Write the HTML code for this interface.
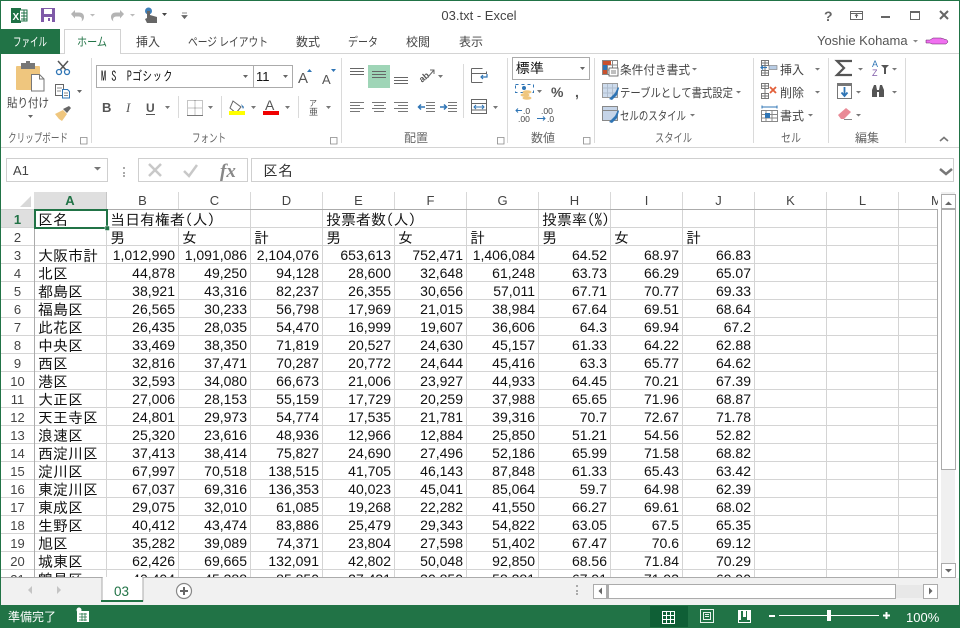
<!DOCTYPE html>
<html><head><meta charset="utf-8">
<style>
html,body{margin:0;padding:0;background:#fff}
#p{position:relative;width:960px;height:628px;overflow:hidden;background:#fff;font-family:"Liberation Sans","IPAGothic",sans-serif}
#g{position:absolute;left:35px;top:210px;width:902px;height:367px;overflow:hidden;background:repeating-linear-gradient(to bottom,transparent 0,transparent 17px,#d4d4d4 17px,#d4d4d4 18px)}
table{border-collapse:separate;border-spacing:0;table-layout:fixed;width:864px;position:absolute;left:0;top:0;background:#fff}
col{width:72px}
td{height:15px;padding:2px 3px 0 0;border-right:1px solid #d4d4d4;border-bottom:1px solid #d4d4d4;font:14px/15px "Liberation Sans",sans-serif;color:#111;text-align:right;box-sizing:content-box;white-space:nowrap;overflow:visible;vertical-align:top}
tr td{width:68px}
td.t{font:15px/15px "IPAGothic","Liberation Sans",sans-serif;text-align:left;padding:2px 0 0 3px;width:68px}
#rh div{position:absolute;left:1px;width:33px;height:17px;border-bottom:1px solid #d4d4d4;text-align:center;font:13px/20px "Liberation Sans",sans-serif;color:#444}
#ch div{position:absolute;top:192px;height:17px;text-align:center;font:13px/17px "Liberation Sans",sans-serif;color:#444;box-sizing:border-box;border-right:1px solid #d8d8d8}
svg{position:absolute;left:0;top:0}
svg text{font-family:"Noto Sans CJK JP","Liberation Sans",sans-serif;font-size:12px;fill:#444}
svg text.l{fill:#666}
</style></head><body><div id="p">

<div id="ch">
<div style="left:34px;width:73px;background:#dfdfdf;font-weight:bold;color:#217346;border-right:1px solid #c6c6c6">A</div>
<div style="left:107px;width:72px">B</div><div style="left:179px;width:72px">C</div><div style="left:251px;width:72px">D</div><div style="left:323px;width:72px">E</div><div style="left:395px;width:72px">F</div><div style="left:467px;width:72px">G</div><div style="left:539px;width:72px">H</div><div style="left:611px;width:72px">I</div><div style="left:683px;width:72px">J</div><div style="left:755px;width:72px">K</div><div style="left:827px;width:72px">L</div><div style="left:899px;width:39px;border:0;text-align:left;padding-left:32px;overflow:hidden;white-space:nowrap">M</div>
</div>

<div id="rh">
<div style="top:210px;background:#dfdfdf;color:#217346;font-weight:bold">1</div>
<div style="top:228px">2</div><div style="top:246px">3</div><div style="top:264px">4</div><div style="top:282px">5</div><div style="top:300px">6</div><div style="top:318px">7</div><div style="top:336px">8</div><div style="top:354px">9</div><div style="top:372px">10</div><div style="top:390px">11</div><div style="top:408px">12</div><div style="top:426px">13</div><div style="top:444px">14</div><div style="top:462px">15</div><div style="top:480px">16</div><div style="top:498px">17</div><div style="top:516px">18</div><div style="top:534px">19</div><div style="top:552px">20</div>
<div style="top:570px;height:7px;border:0;overflow:hidden">21</div>
</div>

<div id="g"><table><colgroup><col><col><col><col><col><col><col><col><col><col><col><col></colgroup>
<tr><td class="t">区名</td><td class="t" style="border-right:0">当日有権者(人)</td><td class="t" style="border-right:1px solid #d4d4d4"></td><td class="t"></td><td class="t" style="border-right:0">投票者数(人)</td><td class="t" style="border-right:1px solid #d4d4d4"></td><td class="t"></td><td class="t">投票率(%)</td><td class="t"></td><td class="t"></td><td class="t"></td><td class="t"></td></tr>
<tr><td class="t"></td><td class="t">男</td><td class="t">女</td><td class="t">計</td><td class="t">男</td><td class="t">女</td><td class="t">計</td><td class="t">男</td><td class="t">女</td><td class="t">計</td><td class="t"></td><td class="t"></td></tr>
<tr><td class="t">大阪市計</td><td>1,012,990</td><td>1,091,086</td><td>2,104,076</td><td>653,613</td><td>752,471</td><td>1,406,084</td><td>64.52</td><td>68.97</td><td>66.83</td><td></td><td></td></tr>
<tr><td class="t">北区</td><td>44,878</td><td>49,250</td><td>94,128</td><td>28,600</td><td>32,648</td><td>61,248</td><td>63.73</td><td>66.29</td><td>65.07</td><td></td><td></td></tr>
<tr><td class="t">都島区</td><td>38,921</td><td>43,316</td><td>82,237</td><td>26,355</td><td>30,656</td><td>57,011</td><td>67.71</td><td>70.77</td><td>69.33</td><td></td><td></td></tr>
<tr><td class="t">福島区</td><td>26,565</td><td>30,233</td><td>56,798</td><td>17,969</td><td>21,015</td><td>38,984</td><td>67.64</td><td>69.51</td><td>68.64</td><td></td><td></td></tr>
<tr><td class="t">此花区</td><td>26,435</td><td>28,035</td><td>54,470</td><td>16,999</td><td>19,607</td><td>36,606</td><td>64.3</td><td>69.94</td><td>67.2</td><td></td><td></td></tr>
<tr><td class="t">中央区</td><td>33,469</td><td>38,350</td><td>71,819</td><td>20,527</td><td>24,630</td><td>45,157</td><td>61.33</td><td>64.22</td><td>62.88</td><td></td><td></td></tr>
<tr><td class="t">西区</td><td>32,816</td><td>37,471</td><td>70,287</td><td>20,772</td><td>24,644</td><td>45,416</td><td>63.3</td><td>65.77</td><td>64.62</td><td></td><td></td></tr>
<tr><td class="t">港区</td><td>32,593</td><td>34,080</td><td>66,673</td><td>21,006</td><td>23,927</td><td>44,933</td><td>64.45</td><td>70.21</td><td>67.39</td><td></td><td></td></tr>
<tr><td class="t">大正区</td><td>27,006</td><td>28,153</td><td>55,159</td><td>17,729</td><td>20,259</td><td>37,988</td><td>65.65</td><td>71.96</td><td>68.87</td><td></td><td></td></tr>
<tr><td class="t">天王寺区</td><td>24,801</td><td>29,973</td><td>54,774</td><td>17,535</td><td>21,781</td><td>39,316</td><td>70.7</td><td>72.67</td><td>71.78</td><td></td><td></td></tr>
<tr><td class="t">浪速区</td><td>25,320</td><td>23,616</td><td>48,936</td><td>12,966</td><td>12,884</td><td>25,850</td><td>51.21</td><td>54.56</td><td>52.82</td><td></td><td></td></tr>
<tr><td class="t">西淀川区</td><td>37,413</td><td>38,414</td><td>75,827</td><td>24,690</td><td>27,496</td><td>52,186</td><td>65.99</td><td>71.58</td><td>68.82</td><td></td><td></td></tr>
<tr><td class="t">淀川区</td><td>67,997</td><td>70,518</td><td>138,515</td><td>41,705</td><td>46,143</td><td>87,848</td><td>61.33</td><td>65.43</td><td>63.42</td><td></td><td></td></tr>
<tr><td class="t">東淀川区</td><td>67,037</td><td>69,316</td><td>136,353</td><td>40,023</td><td>45,041</td><td>85,064</td><td>59.7</td><td>64.98</td><td>62.39</td><td></td><td></td></tr>
<tr><td class="t">東成区</td><td>29,075</td><td>32,010</td><td>61,085</td><td>19,268</td><td>22,282</td><td>41,550</td><td>66.27</td><td>69.61</td><td>68.02</td><td></td><td></td></tr>
<tr><td class="t">生野区</td><td>40,412</td><td>43,474</td><td>83,886</td><td>25,479</td><td>29,343</td><td>54,822</td><td>63.05</td><td>67.5</td><td>65.35</td><td></td><td></td></tr>
<tr><td class="t">旭区</td><td>35,282</td><td>39,089</td><td>74,371</td><td>23,804</td><td>27,598</td><td>51,402</td><td>67.47</td><td>70.6</td><td>69.12</td><td></td><td></td></tr>
<tr><td class="t">城東区</td><td>62,426</td><td>69,665</td><td>132,091</td><td>42,802</td><td>50,048</td><td>92,850</td><td>68.56</td><td>71.84</td><td>70.29</td><td></td><td></td></tr>
<tr><td class="t">鶴見区</td><td>40,404</td><td>45,388</td><td>85,850</td><td>27,431</td><td>30,850</td><td>58,281</td><td>67.91</td><td>71.93</td><td>69.90</td><td></td><td></td></tr>
</table></div>

<svg width="960" height="628" viewBox="0 0 960 628">
<!-- window frame -->
<rect x="0" y="0" width="960" height="1" fill="#217346"/>
<rect x="0" y="0" width="1" height="628" fill="#217346"/>
<rect x="959" y="0" width="1" height="628" fill="#217346"/>
<!-- quick access -->
<rect x="11" y="8" width="10" height="15" fill="#1e7145"/><path d="M20 10h7v11h-7" fill="#fff" stroke="#1e7145"/><path d="M21 13h6M21 16h6M21 19h6M24 10v11" stroke="#1e7145"/>
<text x="12.500" y="20" style="font:bold 10px 'Liberation Sans';fill:#fff">X</text>
<rect x="41" y="8" width="14" height="14" fill="#7f5aa8"/><rect x="44" y="9" width="8" height="5" fill="#fff"/><rect x="44" y="17" width="8" height="5" fill="#fff"/><rect x="48" y="18" width="2" height="3" fill="#7f5aa8"/>
<path d="M71 14l4-4v2.500h4c3.500 0 5 2 5 4.500 0 2-1 3.500-2.500 4.500 1-2 .5-5-3-5h-3.500v2z" fill="#b4b4b4"/>
<path d="M124 14l-4-4v2.500h-4c-3.500 0-5 2-5 4.500 0 2 1 3.500 2.500 4.500-1-2-.5-5 3-5h3.500v2z" fill="#b4b4b4"/>
<path d="M90 14h5l-2.500 2.500zM130 14h5l-2.500 2.500z" fill="#bbb"/>
<circle cx="148.500" cy="11" r="3.500" fill="#3f7fb8"/><path d="M147 11v7l-2 1 2 4h10v-6l-7-2v-4z" fill="#666"/>
<path d="M162 13h5l-2.500 3z" fill="#444"/><path d="M182 13h5M182 15.500h5l-2.500 3z" stroke="#666" stroke-width=".8" fill="#666"/>
<text x="479" y="20" text-anchor="middle" style="font:13px 'Liberation Sans';fill:#444">03.txt - Excel</text>
<!-- window controls -->
<text x="824" y="21" style="font:bold 14px 'Liberation Sans';fill:#666">?</text>
<rect x="850.500" y="11.500" width="12" height="8" fill="none" stroke="#666"/><path d="M850 13.500h13M856.500 18v-3M855 16l1.500-1.500 1.500 1.500" stroke="#666" fill="none"/>
<rect x="881" y="16" width="9" height="2" fill="#666"/>
<rect x="910.500" y="11.500" width="9" height="8" fill="none" stroke="#666"/><rect x="910" y="11" width="10" height="2" fill="#666"/>
<path d="M940 11l8 8M948 11l-8 8" stroke="#666" stroke-width="2"/>
<!-- tabs -->
<rect x="1" y="29" width="59" height="25" fill="#217346"/>
<path d="M64.500 54v-24.500h56v24.500" fill="#fff" stroke="#d2d2d2"/>
<rect x="60" y="53" width="4" height="1" fill="#d4d4d4"/><rect x="120" y="53" width="839" height="1" fill="#d4d4d4"/>
<text x="13" y="46" textLength="34" lengthAdjust="spacingAndGlyphs" style="fill:#fff">ファイル</text>
<text x="77" y="46" textLength="30" lengthAdjust="spacingAndGlyphs" style="fill:#217346">ホーム</text>
<text x="136" y="46">挿入</text><text x="188" y="46" textLength="80" lengthAdjust="spacingAndGlyphs">ページ レイアウト</text><text x="296" y="46">数式</text><text x="348" y="46" textLength="30" lengthAdjust="spacingAndGlyphs">データ</text><text x="406" y="46">校閲</text><text x="459" y="46">表示</text>
<text x="817" y="45" style="font:13px 'Liberation Sans';fill:#555">Yoshie Kohama</text>
<path d="M913 40h5l-2.500 2.500z" fill="#888"/>
<path d="M926 40h4l3-2h8l6 2 1 2-2 2h-14l-2-1h-4z" fill="#f070f0" stroke="#602060" stroke-width=".5"/>
<rect x="1" y="147" width="958" height="1" fill="#d4d4d4"/>
<!-- ribbon separators -->
<path d="M91.500 58v85M341.500 58v85M507.500 58v85M594.500 58v85M753.500 58v85M828.500 58v85M905.500 58v85" stroke="#dadada"/>
<path d="M178.500 96v22M221.500 96v22M298.500 96v22M463.500 64v54" stroke="#dadada"/>
<!-- launchers -->
<path d="M80.500 137.500h6.500v6.500h-6.500zM330.500 137.500h6.500v6.500h-6.500zM497.500 137.500h6.500v6.500h-6.500zM583.500 137.500h6.500v6.500h-6.500z" fill="none" stroke="#888" stroke-width=".8"/>
<!-- clipboard group -->
<rect x="16" y="66" width="24" height="24" rx="1" fill="#efc67e"/><rect x="21" y="63" width="14" height="6" fill="#777"/><rect x="26" y="61" width="4" height="4" fill="#777"/>
<path d="M31.500 74.500h8l4.500 4.500v12h-12.500z" fill="#fff" stroke="#777"/><path d="M39.500 74.500v4.500h4.500" fill="none" stroke="#777"/>
<text x="7" y="107" textLength="42" lengthAdjust="spacingAndGlyphs">貼り付け</text>
<path d="M28 115h5l-2.500 3zM77 90h5l-2.500 3z" fill="#666"/>
<path d="M58 61l8 9M68 61l-8 9" stroke="#555" stroke-width="1.500"/><circle cx="59" cy="72" r="2.500" fill="none" stroke="#2f75b5" stroke-width="1.300"/><circle cx="67" cy="72" r="2.500" fill="none" stroke="#2f75b5" stroke-width="1.300"/>
<path d="M55.500 84.500h8v11h-8z" fill="#fff" stroke="#666"/><path d="M62.500 89.500h5l2 2v6.500h-7z" fill="#fff" stroke="#2f75b5"/><path d="M57 88h5M57 91h4M64 93h4M64 95.500h4" stroke="#666" stroke-width=".8"/>
<path d="M55 114l8-4 4 4-5 7-3-2z" fill="#efc67e"/><path d="M63 109l6-3 2 2-4 5z" fill="#666"/>
<text x="8" y="142" class="l" textLength="60" lengthAdjust="spacingAndGlyphs">クリップボード</text>
<!-- font group -->
<rect x="96.500" y="65.500" width="157" height="22" fill="#fff" stroke="#ababab"/><rect x="253.500" y="65.500" width="39" height="22" fill="#fff" stroke="#ababab"/>
<text x="101" y="81" textLength="72" lengthAdjust="spacingAndGlyphs" style="font:13.500px 'IPAGothic','Liberation Sans',sans-serif;fill:#111">M S&#160;&#160;Pゴシック</text>
<text x="256" y="81" style="font:13px 'Liberation Sans';fill:#111">11</text>
<path d="M243 75h5l-2.500 3zM283 75h5l-2.500 3z" fill="#666"/>
<text x="298" y="83" style="font:15px 'Liberation Sans';fill:#555">A</text><path d="M307 72h5l-2.500-3z" fill="#2f75b5"/>
<text x="322" y="84" style="font:13px 'Liberation Sans';fill:#555">A</text><path d="M331 69h5l-2.500 3z" fill="#2f75b5"/>
<text x="102" y="112" style="font:bold 13px 'Liberation Sans';fill:#555">B</text>
<text x="126" y="112" style="font:italic 13px 'Liberation Serif';fill:#555">I</text>
<text x="146" y="112" style="font:bold 12px 'Liberation Sans';fill:#555">U</text><rect x="146" y="114" width="9" height="1" fill="#555"/>
<path d="M165 106h5l-2.500 3zM208 106h5l-2.500 3zM251 106h5l-2.500 3zM285 106h5l-2.500 3z" fill="#777"/>
<path d="M187.500 100.500h15v15h-15zM187.500 108h15M195 100.500v15" fill="none" stroke="#888" stroke-dasharray="1 1"/><path d="M187 115.500h16" stroke="#777"/>
<path d="M233 101l8 6-5 6-6-5z" fill="#fff" stroke="#666"/><path d="M241 104l3 3-1 2z" fill="#2f75b5"/><rect x="229" y="111" width="16" height="4" fill="#ffff00"/>
<text x="265" y="110" style="font:14px 'Liberation Sans';fill:#555">A</text><rect x="263" y="111" width="16" height="4" fill="#f00000"/>
<text x="309" y="106" style="font:8px 'Noto Sans CJK JP';fill:#555">ア</text><text x="309" y="115" style="font:9px 'Noto Sans CJK JP';fill:#555">亜</text>
<path d="M326 106h5l-2.500 3z" fill="#777"/>
<text x="192" y="142" class="l" textLength="34" lengthAdjust="spacingAndGlyphs">フォント</text>
<!-- alignment -->
<rect x="368" y="65" width="22" height="23" fill="#9fd5b7"/>
<path d="M350 68.500h14M350 71.500h14M350 74.500h14M372 74.500h14M372 77.500h14M372 71.500h14M394 77.500h14M394 80.500h14M394 83.500h14" stroke="#666"/>
<path d="M350 102.500h14M350 105.500h10M350 108.500h14M350 111.500h10M372 102.500h14M374 105.500h10M372 108.500h14M374 111.500h10M394 102.500h14M398 105.500h10M394 108.500h14M398 111.500h10" stroke="#777"/>
<path d="M426 102.500h9M426 105.500h9M426 108.500h9M426 111.500h9M448 102.500h9M448 105.500h9M448 108.500h9M448 111.500h9" stroke="#777"/>
<path d="M425 107h-6M421 104.500l-2.500 2.500 2.500 2.500M440 107h6M444 104.500l2.500 2.500-2.500 2.500" stroke="#2f75b5" stroke-width="1.500" fill="none"/>
<text x="418" y="80" transform="rotate(-40 424 76)" style="font:bold 9px 'Liberation Sans';fill:#555">ab</text><path d="M428 77l6-7M430 70h4v4" stroke="#666" fill="none"/>
<path d="M438 75h5l-2.500 3zM493 106h5l-2.500 3z" fill="#777"/>
<path d="M471.500 68.500h11M471.500 73.500h15v-2M471.500 82.500h11M471.500 68.500v14" fill="none" stroke="#666"/><path d="M487 74v3h-6M483 75l-2 2 2 2" fill="none" stroke="#2f75b5" stroke-width="1.200"/>
<path d="M471.500 99.500h15v14h-15zM471.500 103.500h15M471.500 110h15" fill="none" stroke="#666"/><path d="M474 107h10M476 105l-2 2 2 2M482 105l2 2-2 2" fill="none" stroke="#2f75b5"/>
<text x="404" y="142" class="l">配置</text>
<!-- number -->
<rect x="512.500" y="57.500" width="77" height="22" fill="#fff" stroke="#ababab"/>
<text x="516" y="73" style="font:14px 'IPAGothic';fill:#111">標準</text>
<path d="M580 67h5l-2.500 3z" fill="#666"/>
<path d="M515.500 84.500h18v8h-18z" fill="none" stroke="#2f75b5" stroke-dasharray="3 3"/><circle cx="524" cy="88" r="2" fill="#2f75b5"/><ellipse cx="527" cy="92" rx="4.500" ry="1.800" fill="#efc67e"/><ellipse cx="525" cy="95" rx="4.500" ry="1.800" fill="#efc67e"/><ellipse cx="527" cy="98" rx="4.500" ry="1.800" fill="#efc67e"/>
<path d="M537 90h5l-2.500 3z" fill="#777"/>
<text x="551" y="97" style="font:bold 14px 'Liberation Sans';fill:#555">%</text>
<text x="575" y="97" style="font:bold 14px 'Liberation Sans';fill:#555">,</text>
<text x="523" y="114" style="font:8.500px 'Liberation Sans';fill:#444">.0</text><text x="518" y="122" style="font:8.500px 'Liberation Sans';fill:#444">.00</text>
<path d="M522 110.500h-6M518 108.500l-2 2 2 2" stroke="#2f75b5" fill="none"/>
<text x="541" y="114" style="font:8.500px 'Liberation Sans';fill:#444">.00</text><text x="547" y="122" style="font:8.500px 'Liberation Sans';fill:#444">.0</text>
<path d="M537 118.500h8M543 116.500l2 2-2 2" stroke="#2f75b5" fill="none"/>
<text x="531" y="142" class="l">数値</text>
<!-- styles -->
<path d="M602.500 60.500h15v14h-15zM602.500 65h15M607.500 60.500v14M612.500 60.500v14M602.500 70h15" fill="none" stroke="#888"/>
<rect x="603" y="61" width="8" height="4" fill="#c8502d"/><rect x="603" y="65" width="4" height="5" fill="#2f75b5"/><rect x="603" y="70" width="4" height="4" fill="#c8502d"/><rect x="609" y="68" width="9" height="8" fill="#fff" stroke="#555" stroke-width=".8"/><path d="M611 71h5M611 73h5" stroke="#555" stroke-width=".8"/>
<path d="M602.500 83.500h15v14h-15zM602.500 88h15M607.500 83.500v14M612.500 83.500v14M602.500 93h15" fill="none" stroke="#999"/><rect x="603" y="84" width="14" height="13" fill="#b8cce4" opacity=".7"/><path d="M609 99l6-6 3-6 1 1-2 7-5 5z" fill="#2f75b5"/>
<path d="M602.500 106.500h15v14h-15z" fill="#c5d4e8" stroke="#888"/><path d="M602.500 110.500h15" stroke="#888"/><path d="M609 122l6-6 3-6 1 1-2 7-5 5z" fill="#2f75b5"/>
<text x="620" y="74" textLength="70" lengthAdjust="spacingAndGlyphs">条件付き書式</text><path d="M692 68h5l-2.500 2.500z" fill="#777"/>
<text x="620" y="97" textLength="113" lengthAdjust="spacingAndGlyphs">テーブルとして書式設定</text><path d="M736 91h5l-2.500 2.500z" fill="#777"/>
<text x="620" y="120" textLength="66" lengthAdjust="spacingAndGlyphs">セルのスタイル</text><path d="M690 114h5l-2.500 2.500z" fill="#777"/>
<text x="655" y="142" class="l" textLength="37" lengthAdjust="spacingAndGlyphs">スタイル</text>
<!-- cells -->
<path d="M761.500 60.500h7v5h-7zM761.500 70.500h7v5h-7zM765 60.500v15M761.500 63h7M761.500 73h7" fill="none" stroke="#777"/><rect x="769" y="65.500" width="8" height="4" fill="#b8cce4" stroke="#777" stroke-width=".6"/><path d="M767 67.500h-6M763 65.500l-2 2 2 2" stroke="#2f75b5" stroke-width="1.200" fill="none"/>
<path d="M761.500 83.500h7v5h-7zM761.500 93.500h7v5h-7zM765 83.500v15M761.500 86h7M761.500 96h7" fill="none" stroke="#777"/><path d="M770 87l6 6M776 87l-6 6" stroke="#e2603a" stroke-width="1.800"/>
<path d="M761.500 110.500h16v11h-16zM761.500 114.500h16M761.500 118h16M766 110.500v11M772 110.500v11" fill="none" stroke="#888"/><rect x="765" y="113" width="5" height="5" fill="#2f75b5"/><path d="M762 107h15M762 105.500v3M777 105.500v3" stroke="#2f75b5"/>
<text x="780" y="74">挿入</text><text x="780" y="97">削除</text><text x="780" y="120">書式</text>
<path d="M815 68h5l-2.500 2.500zM815 91h5l-2.500 2.500zM808 114h5l-2.500 2.500z" fill="#777"/>
<text x="781" y="142" class="l" textLength="20" lengthAdjust="spacingAndGlyphs">セル</text>
<!-- editing -->
<path d="M852 61h-15l7 7-7 7h15" fill="none" stroke="#555" stroke-width="2.200"/>
<path d="M858 68h5l-2.500 2.500zM892 68h5l-2.500 2.500zM856 91h5l-2.500 2.500zM892 91h5l-2.500 2.500zM856 114h5l-2.500 2.500z" fill="#777"/>
<text x="872" y="67" style="font:9px 'Liberation Sans';fill:#2f75b5">A</text><text x="872" y="76" style="font:9px 'Liberation Sans';fill:#7f5aa8">Z</text><path d="M881 65h8l-3 3v6h-2v-6z" fill="#555"/>
<rect x="837.500" y="83.500" width="14" height="15" fill="#fff" stroke="#777"/><rect x="837" y="83" width="15" height="3" fill="#777"/><path d="M844.500 87v9M841.500 92.500l3 3.500 3-3.500" stroke="#2f75b5" stroke-width="1.800" fill="none"/>
<path d="M872 97v-7l2-5h2l1 5h2l1-5h2l2 5v7h-5v-5h-2v5z" fill="#555"/>
<path d="M838 115l8-7 5 4-7 7h-3z" fill="#e98a96"/><path d="M844 119.500h8" stroke="#888"/>
<text x="855" y="142" class="l">編集</text>
<path d="M940 141l4-3.500 4 3.500" fill="none" stroke="#777" stroke-width="1.600"/>
<!-- formula bar -->
<rect x="6.500" y="158.500" width="101" height="23" fill="#fff" stroke="#cfcfcf"/>
<text x="13" y="175" style="font:13px 'Liberation Sans';fill:#444">A1</text>
<path d="M94 167h7l-3.500 3.500z" fill="#777"/>
<path d="M123 167h2v2h-2zM123 172h2v2h-2zM123 177h2v-2h-2z" fill="#aaa"/>
<rect x="138.500" y="158.500" width="109" height="23" fill="#fff" stroke="#cfcfcf"/>
<path d="M149 164l12 12M161 164l-12 12" stroke="#c8c8c8" stroke-width="2.500"/>
<path d="M184 171l5 5 8-11" fill="none" stroke="#c8c8c8" stroke-width="2.500"/>
<text x="220" y="177" style="font:italic bold 19px 'Liberation Serif';fill:#888">fx</text>
<rect x="251.500" y="158.500" width="702" height="23" fill="#fff" stroke="#cfcfcf"/>
<text x="263" y="176" style="font:15px 'IPAGothic';fill:#333">区名</text>
<path d="M940 169l6 5 6-5" fill="none" stroke="#777" stroke-width="2.500"/>
<!-- corner -->
<path d="M31 196v11h-11z" fill="#d8d8d8"/>
<!-- grid borders -->
<rect x="34" y="209" width="904" height="1" fill="#ababab"/>
<rect x="34" y="209" width="1" height="369" fill="#ababab"/>
<rect x="937" y="209" width="1" height="369" fill="#ababab"/>
<rect x="1" y="209" width="33" height="1" fill="#d4d4d4"/>
<!-- selection -->
<rect x="35" y="210" width="72" height="18" fill="none" stroke="#217346" stroke-width="2"/>
<rect x="105" y="226" width="4.500" height="4.500" fill="#217346" stroke="#fff" stroke-width=".5"/>
<!-- vertical scrollbar -->
<rect x="941" y="192" width="14" height="386" fill="#f0f0f0"/>
<rect x="941.500" y="194.500" width="14" height="14" fill="#fff" stroke="#ababab"/><path d="M945 205h7l-3.500-3.500z" fill="#666"/>
<rect x="941.500" y="209.500" width="14" height="260" fill="#fff" stroke="#ababab"/>
<rect x="941.500" y="563.500" width="14" height="14" fill="#fff" stroke="#ababab"/><path d="M945 569h7l-3.500 3.500z" fill="#666"/>
<!-- tab bar -->
<rect x="1" y="578" width="958" height="27" fill="#f1f1f1"/>
<rect x="1" y="577" width="937" height="1" fill="#ababab"/>
<path d="M102 577.500v23.500h41v-23.500" fill="#fff" stroke="#ababab"/><rect x="103" y="577" width="39" height="2" fill="#fff"/>
<rect x="101" y="600" width="42" height="2" fill="#217346"/>
<text x="114" y="596" style="font:13.500px 'Liberation Sans';fill:#217346">03</text>
<path d="M32 586v8l-4-4zM57 586v8l4-4z" fill="#c4c4c4"/>
<circle cx="184" cy="591" r="7.500" fill="#fff" stroke="#888" stroke-width="1.200"/><path d="M180 591h8M184 587v8" stroke="#666" stroke-width="2"/>
<path d="M576 585h2v2h-2zM576 590h2v2h-2zM576 595h2v-2h-2z" fill="#aaa"/>
<!-- horizontal scrollbar -->
<rect x="593.500" y="584.500" width="14" height="14" fill="#fff" stroke="#ababab"/><path d="M602 587.500v7l-3.500-3.500z" fill="#666"/>
<rect x="607.500" y="584.500" width="288" height="14" fill="#fff" stroke="#ababab"/><rect x="606" y="584" width="3" height="15" fill="#ababab"/>
<rect x="896" y="585" width="27" height="13" fill="#e8e8e8"/>
<rect x="923.500" y="584.500" width="14" height="14" fill="#fff" stroke="#ababab"/><path d="M929 587.500v7l3.500-3.500z" fill="#666"/>
<!-- status bar -->
<rect x="0" y="605" width="960" height="23" fill="#217346"/>
<text x="8" y="621" style="fill:#fff">準備完了</text>
<path d="M77 611h12v11h-12z" fill="#fff"/><circle cx="79" cy="610" r="2.500" fill="#fff"/><path d="M79 614h8M79 617h8M79 620h8M82 613v8M85 613v8" stroke="#217346" stroke-width=".8"/>
<rect x="650" y="606" width="38" height="21" fill="#0f5f36"/>
<path d="M662.500 611.500h12v12h-12zM662.500 615.500h12M662.500 619.500h12M666.500 611.500v12M670.500 611.500v12" fill="none" stroke="#fff"/>
<path d="M700.500 609.500h13v13h-13zM703.500 612.500h7v7h-7zM705 614.500h4M705 616.500h4" fill="none" stroke="#e8f2ec"/>
<path d="M738.500 610.500h12v12h-12z" fill="none" stroke="#fff"/><path d="M743 610h3v7h-3zM738 610h3v10h-3zM747 610h3v10h-3z" fill="#fff"/>
<rect x="769" y="615" width="6" height="2" fill="#fff"/>
<rect x="779" y="615" width="100" height="1" fill="#fff"/>
<rect x="827" y="610" width="4" height="11" fill="#fff"/>
<path d="M883 615.500h7M886.500 612v7" stroke="#fff" stroke-width="2"/>
<text x="906" y="622" style="font:13px 'Liberation Sans';fill:#fff">100%</text>
</svg>
</div></body></html>
